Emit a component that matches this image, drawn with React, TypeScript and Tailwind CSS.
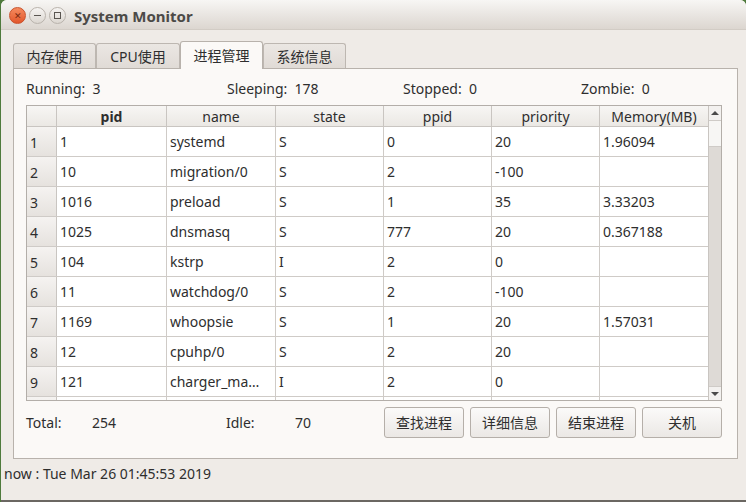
import React from 'react';

interface Proc {
  pid: string;
  name: string;
  state: string;
  ppid: string;
  priority: string;
  memory: string;
}

const procs: Proc[] = [
  { pid: '1', name: 'systemd', state: 'S', ppid: '0', priority: '20', memory: '1.96094' },
  { pid: '10', name: 'migration/0', state: 'S', ppid: '2', priority: '-100', memory: '' },
  { pid: '1016', name: 'preload', state: 'S', ppid: '1', priority: '35', memory: '3.33203' },
  { pid: '1025', name: 'dnsmasq', state: 'S', ppid: '777', priority: '20', memory: '0.367188' },
  { pid: '104', name: 'kstrp', state: 'I', ppid: '2', priority: '0', memory: '' },
  { pid: '11', name: 'watchdog/0', state: 'S', ppid: '2', priority: '-100', memory: '' },
  { pid: '1169', name: 'whoopsie', state: 'S', ppid: '1', priority: '20', memory: '1.57031' },
  { pid: '12', name: 'cpuhp/0', state: 'S', ppid: '2', priority: '20', memory: '' },
  { pid: '121', name: 'charger_ma…', state: 'I', ppid: '2', priority: '0', memory: '' },
  { pid: '', name: '', state: '', ppid: '', priority: '', memory: '' },
];

const tabs = ['内存使用', 'CPU使用', '进程管理', '系统信息'];
const tabWidths = ['w-[83px]', 'w-[84px]', 'w-[83px]', 'w-[83px]'];
const cols = 'grid-cols-[110px_109px_108px_108px_108px_108px]';
const actions = ['查找进程', '详细信息', '结束进程', '关机'];

const font = { fontFamily: '"Noto Sans", "Noto Sans CJK SC", sans-serif' };

const App: React.FC = () => {
  return (
    <div className="w-[746px] h-[502px] overflow-hidden bg-[#4f7a3c] pl-px text-[14px] text-[#3c3c3c]" style={font}>
      <div className="h-[500px] flex flex-col bg-[#efebe7] rounded-t-[6px] overflow-hidden">
        {/* title bar */}
        <div className="h-[30px] flex items-center bg-gradient-to-b from-[#f7f6f4] to-[#dcd6d0] border-b border-[#d2ccc5] shrink-0">
          <div className="flex items-center gap-[3px] ml-[8px] mt-[1px]">
            <div className="w-[17px] h-[17px] rounded-full bg-gradient-to-b from-[#f58a5e] to-[#e2562a] border border-[#c9522c] flex items-center justify-center text-[9px] leading-none text-[#7a2a10]">✕</div>
            <div className="w-[17px] h-[17px] rounded-full bg-gradient-to-b from-[#f6f4f2] to-[#dcd7d1] border border-[#b9b3ac] flex items-center justify-center">
              <div className="w-[7px] h-px bg-[#5a5651]" />
            </div>
            <div className="w-[17px] h-[17px] rounded-full bg-gradient-to-b from-[#f6f4f2] to-[#dcd7d1] border border-[#b9b3ac] flex items-center justify-center">
              <div className="w-[7px] h-[7px] border border-[#5a5651]" />
            </div>
          </div>
          <span className="ml-[8px] mt-[3px] font-bold text-[15px] text-[#4c4a47]">System Monitor</span>
        </div>

        {/* tabs */}
        <div className="flex items-end pl-[12px] pt-[10px] h-[38px] shrink-0">
          {tabs.map((t, i) =>
            i === 2 ? (
              <div key={t} className={`${tabWidths[i]} h-[28px] -mb-px z-10 bg-[#fbf9f7] border border-b-0 border-[#b8b2ac] rounded-t-[3px] flex items-center justify-center text-[#2e2e2e]`}>{t}</div>
            ) : (
              <div key={t} className={`${tabWidths[i]} h-[25px] bg-gradient-to-b from-[#ebe7e3] to-[#e0dbd6] border border-b-0 border-[#bdb7b1] rounded-t-[3px] flex items-center justify-center text-[#2e2e2e]`}>{t}</div>
            )
          )}
        </div>

        {/* pane */}
        <div className="ml-[12px] mr-[8px] h-[391px] bg-[#fbf9f7] border border-[#b8b2ac] flex flex-col px-[12px] shrink-0">
          <div className="h-[36px] flex items-center pt-[2px] text-[#2e2e2e]">
            <span className="w-[201px]">Running:&nbsp; 3</span>
            <span className="w-[176px]">Sleeping:&nbsp; 178</span>
            <span className="w-[178px]">Stopped:&nbsp; 0</span>
            <span>Zombie:&nbsp; 0</span>
          </div>

          {/* table */}
          <div className="w-[696px] h-[296px] border border-[#b3aea9] bg-white flex overflow-hidden">
            <div className="w-[681px] flex flex-col">
              <div className="h-[21px] flex shrink-0 bg-gradient-to-b from-[#f7f6f4] to-[#ebe8e4] border-b border-[#c9c5c1]">
                <div className="w-[30px] border-r border-[#c9c5c1]" />
                <div className={`grid ${cols} flex-1`}>
                  {['pid', 'name', 'state', 'ppid', 'priority', 'Memory(MB)'].map((h, i) => (
                    <div key={h} className={`flex items-center justify-center border-r border-[#c9c5c1] last:border-r-0 text-[#2e2e2e] ${i === 0 ? 'font-bold' : ''}`}>{h}</div>
                  ))}
                </div>
              </div>
              {procs.map((p, idx) => (
                <div key={idx} className="h-[30px] flex shrink-0 border-b border-[#cfcbc7]">
                  <div className="w-[30px] bg-gradient-to-b from-[#f5f3f1] to-[#e6e2de] border-r border-[#c9c5c1] flex items-center pl-[3px] pt-[2px] text-[#2e2e2e]">{p.pid ? idx + 1 : ''}</div>
                  <div className={`grid ${cols} flex-1`}>
                    {[p.pid, p.name, p.state, p.ppid, p.priority, p.memory].map((v, i) => (
                      <div key={i} className="flex items-center pl-[3px] border-r border-[#cfcbc7] last:border-r-0 text-[#2e2e2e] whitespace-nowrap overflow-hidden">{v}</div>
                    ))}
                  </div>
                </div>
              ))}
            </div>
            {/* scrollbar */}
            <div className="w-[14px] flex flex-col bg-[#dedad6] border-l border-[#c9c5c1]">
              <div className="h-[15px] bg-[#f3f1ef] border-b border-[#cfcbc7] flex items-center justify-center">
                <div className="w-0 h-0 border-l-[4px] border-r-[4px] border-b-[4px] border-l-transparent border-r-transparent border-b-[#4a4a4a]" />
              </div>
              <div className="h-[26px] bg-[#f7f6f4] border-b border-[#cfcbc7]" />
              <div className="flex-1" />
              <div className="h-[14px] bg-[#f3f1ef] border-t border-[#cfcbc7] flex items-center justify-center">
                <div className="w-0 h-0 border-l-[4px] border-r-[4px] border-t-[4px] border-l-transparent border-r-transparent border-t-[#4a4a4a]" />
              </div>
            </div>
          </div>

          {/* bottom row */}
          <div className="flex items-center mt-[6px] text-[#2e2e2e]">
            <span className="w-[66px]">Total:</span>
            <span className="w-[134px]">254</span>
            <span className="w-[69px]">Idle:</span>
            <span className="w-[89px]">70</span>
            <div className="flex gap-[6px]">
              {actions.map((a) => (
                <button key={a} className="w-[80px] h-[31px] rounded-[3px] border border-[#b5afa9] bg-gradient-to-b from-[#fbfaf9] to-[#ebe8e5] text-[#2e2e2e] flex items-center justify-center">{a}</button>
              ))}
            </div>
          </div>
        </div>

        {/* status */}
        <div className="flex-1 flex items-center pl-[3px] pb-[12px] text-[#2e2e2e]">now : Tue Mar 26 01:45:53 2019</div>
      </div>
      <div className="h-[2px] bg-[#6b6762]" />
    </div>
  );
};

export default App;
